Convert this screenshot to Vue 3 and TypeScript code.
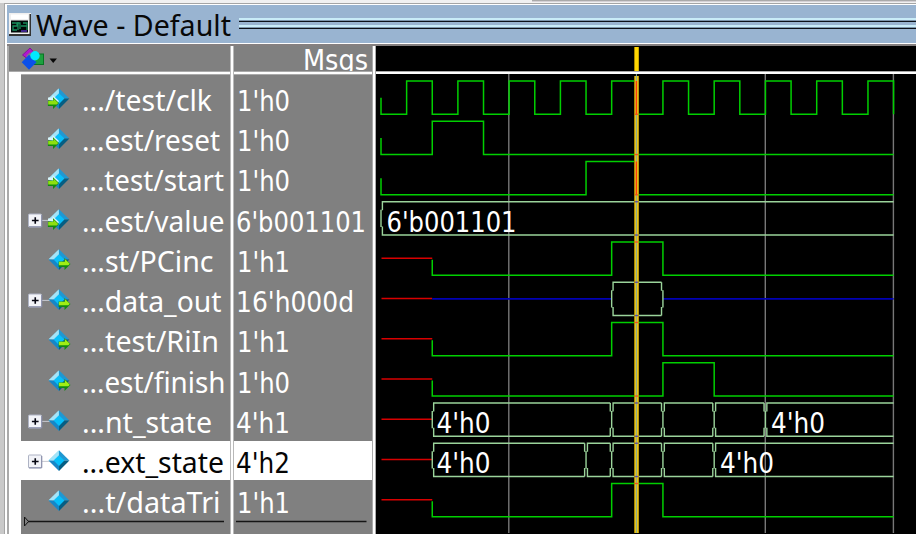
<script setup lang="ts">
type Kind = 'in' | 'out' | 'internal'

interface BusText {
  x: number
  width: number
  text: string
}

interface Signal {
  name: string
  nameWidth: number
  value: string
  valueX: number
  valueWidth: number
  kind: Kind
  expandable?: boolean
  selected?: boolean
  green?: string
  bus?: string
  red?: boolean
  blue?: number[][]
  texts?: BusText[]
}

const PITCH = 40.25
const HIGH = 7
const LOW = 40.3
const MID = 23.7
const LEFT = 5
const tick = (k: number): number => +(LEFT + 25.63 * k).toFixed(2)

// Levels change at the listed ticks, alternating between low and high.
function levels(edges: number[], lead: string, end = 20): string {
  let d = lead
  let high = false
  for (const e of edges) {
    d += `H${tick(e)}V${high ? LOW : HIGH}`
    high = !high
  }
  return d + `H${tick(end)}`
}

const fromStart = `M${LEFT} ${MID}V${LOW}`
const fromUnknown = `M${tick(2)} ${MID + 1}V${LOW}`

function cells(edges: number[], close = false): string {
  let d = ''
  for (let i = 0; i < edges.length; i++) {
    const x = tick(edges[i])
    const last = i === edges.length - 1
    if (!(last && close)) {
      const next = last ? tick(20) : tick(edges[i + 1]) - 1.4
      d += `M${x + 1.4} ${HIGH + 8.5}V${HIGH}H${next}M${x + 1.4} ${LOW - 8.5}V${LOW}H${next}`
    }
    if (i > 0) {
      d += `M${x - 1.4} ${HIGH}V${HIGH + 8.5}M${x - 1.4} ${LOW - 8.5}V${LOW}`
    }
    d += `M${x} ${HIGH + 8}V${LOW - 8}`
  }
  return d
}

const clkEdges = Array.from({ length: 19 }, (_, i) => i + 1)

const signals: Signal[] = [
  { name: '.../test/clk', nameWidth: 130, value: "1'h0", valueX: 3, valueWidth: 53, kind: 'in', green: levels(clkEdges, fromStart) + `V${LOW}` },
  { name: '...est/reset', nameWidth: 138, value: "1'h0", valueX: 3, valueWidth: 53, kind: 'in', green: levels([2, 4], fromStart) },
  { name: '...test/start', nameWidth: 142, value: "1'h0", valueX: 3, valueWidth: 53, kind: 'in', green: levels([8, 10], fromStart) },
  { name: '...est/value', nameWidth: 142.5, value: "6'b001101", valueX: 2, valueWidth: 130, kind: 'in', expandable: true, bus: cells([0]), texts: [{ x: 10.5, width: 130, text: "6'b001101" }] },
  { name: '...st/PCinc', nameWidth: 131.5, value: "1'h1", valueX: 3, valueWidth: 53, kind: 'out', red: true, green: levels([9, 11], fromUnknown) },
  { name: '...data_out', nameWidth: 139.5, value: "16'h000d", valueX: 2, valueWidth: 118, kind: 'out', expandable: true, red: true, blue: [[2, 9], [11, 20]], bus: cells([9, 11], true) },
  { name: '...test/RiIn', nameWidth: 137, value: "1'h1", valueX: 3, valueWidth: 53, kind: 'out', red: true, green: levels([9, 11], fromUnknown) },
  { name: '...est/finish', nameWidth: 143.5, value: "1'h0", valueX: 3, valueWidth: 53, kind: 'out', red: true, green: levels([11, 13], fromUnknown) },
  { name: '...nt_state', nameWidth: 130, value: "4'h1", valueX: 2, valueWidth: 54, kind: 'internal', expandable: true, red: true, bus: cells([2, 9, 11, 13, 15]), texts: [{ x: 60.5, width: 54, text: "4'h0" }, { x: 395, width: 54, text: "4'h0" }] },
  { name: '...ext_state', nameWidth: 142, value: "4'h2", valueX: 2, valueWidth: 54, kind: 'internal', expandable: true, selected: true, red: true, bus: cells([2, 8, 9, 11, 13]), texts: [{ x: 60.5, width: 54, text: "4'h0" }, { x: 344, width: 54, text: "4'h0" }] },
  { name: '...t/dataTri', nameWidth: 138.5, value: "1'h1", valueX: 3, valueWidth: 53, kind: 'internal', red: true, green: levels([9, 11], fromUnknown) },
]

const CURSOR = 260.4
const crossings: { y: number; bus: boolean }[] = [
  { y: LOW, bus: false },
  { y: PITCH + LOW, bus: false },
  { y: PITCH * 2 + LOW, bus: false },
  { y: PITCH * 3 + HIGH, bus: true },
  { y: PITCH * 3 + LOW, bus: true },
  { y: PITCH * 4 + HIGH, bus: false },
  { y: PITCH * 5 + HIGH, bus: true },
  { y: PITCH * 5 + LOW, bus: true },
  { y: PITCH * 6 + HIGH, bus: false },
  { y: PITCH * 7 + LOW, bus: false },
  { y: PITCH * 8 + HIGH, bus: true },
  { y: PITCH * 8 + LOW, bus: true },
  { y: PITCH * 9 + HIGH, bus: true },
  { y: PITCH * 9 + LOW, bus: true },
  { y: PITCH * 10 + HIGH, bus: false },
]
</script>

<template>
  <div class="window">
    <div class="top-edge"><i></i></div>
    <div class="frame">
      <header class="title">
        <svg class="title-icon" width="22" height="23" viewBox="0 0 22 23">
          <rect width="22" height="23" fill="#efefef" />
          <rect x="20.5" y="1" width="1.5" height="22" fill="#333" />
          <rect y="21" width="22" height="2" fill="#333" />
          <rect x="2" y="1.5" width="17" height="4.5" fill="#fff" />
          <rect x="2" y="7.5" width="17" height="12" fill="#020808" />
          <path d="M3 10H8V13H4V17H8M9 9V17M9 10H11V16M12 13H18M14 10H18V17" fill="none" stroke="#188c5b" stroke-width="1.3" />
          <path d="M12 18H18" stroke="#5930c4" stroke-width="1.4" />
        </svg>
        <svg class="title-text" width="202" height="38">
          <text x="5" y="30.7" textLength="195" lengthAdjust="spacingAndGlyphs">Wave - Default</text>
        </svg>
        <div class="grip"><i></i><i></i></div>
      </header>

      <div class="body">
        <section class="names">
          <div class="head">
            <svg width="60" height="25" viewBox="0 0 60 25">
              <path d="M13.5 9L21 2L26 7.5L20 14Z" fill="#b316cf" stroke="#81179a" />
              <path d="M17 10L21 6.2L24 9L20 12Z" fill="#808080" />
              <rect x="23.5" y="8" width="11" height="10.5" fill="#1da23f" stroke="#087525" />
              <path d="M20 8.7L27.5 16.2L20 23.7L12.7 16.2Z" fill="#0b50e9" />
              <circle cx="26" cy="9.7" r="4.7" fill="#00eaff" />
              <path d="M40.5 12.5H48L44.2 17Z" fill="#080808" />
            </svg>
          </div>
          <div class="list name-list">
            <div v-for="s in signals" :key="s.name" class="row" :class="{ selected: s.selected }">
              <svg class="row-icon" width="60" height="39" viewBox="0 -0.5 60 39">
                <template v-if="s.expandable">
                  <path d="M21 19.9H29" stroke="#c6c8cf" />
                  <rect x="7.5" y="13.5" width="13" height="13" rx="1" fill="#f2f3f8" stroke="#aeb3c4" />
                  <path d="M8 26.3H20.8V14.5" fill="none" stroke="#858ba8" />
                  <path d="M10.9 20H17.6M14.25 16.7V23.3" stroke="#050510" stroke-width="1.6" />
                </template>
                <path d="M27.5 19L38 8.7V19Z" fill="#7bd5f5" />
                <path d="M38 8.7L48.4 19H38Z" fill="#2098d2" />
                <path d="M48.4 19L38 29.5V19Z" fill="#065e83" />
                <path d="M38 29.5L27.5 19H38Z" fill="#1686c7" />
                <path d="M38 13.7L43.4 19L38 24.4L32.6 19Z" fill="#06bffa" />
                <path d="M28 18.6L37.5 9.2L37.8 13.5L32.5 18.8Z" fill="#a3e4f8" />
                <template v-if="s.kind === 'in'">
                  <path d="M27 20.3V18H31.6V15.5L38 21.5L37 23Z" fill="#d9f5fa" />
                  <path d="M26.9 21H32V17.8L38 23.6L32 29.5V26.6H26.9Z" fill="#118914" />
                  <path d="M27.2 21.4H32.4V19L37.2 23.5L35.8 25H27.2Z" fill="#8fe010" />
                </template>
                <template v-if="s.kind === 'out'">
                  <path d="M37.6 21H43.5V17.4L49.5 23.4L43.5 29.4V26.5H37.6Z" fill="#118914" />
                  <path d="M38 21.2H43.9V18.6L48.8 23.2L47.4 24.8H38Z" fill="#a0ed15" />
                </template>
              </svg>
              <svg class="label name-label" width="148" height="39">
                <text x="0" y="31.8" :textLength="s.nameWidth" lengthAdjust="spacingAndGlyphs">{{ s.name }}</text>
              </svg>
            </div>
            <svg class="end-mark" width="209" height="12">
              <path d="M3.5 0V9L7.5 4.5Z" fill="none" stroke="#151515" />
              <path d="M7 4.5H203" stroke="#151515" stroke-width="1.3" />
            </svg>
          </div>
        </section>

        <section class="values">
          <div class="head value-head">
            <svg width="70" height="25">
              <text x="1" y="24.2" textLength="65" lengthAdjust="spacingAndGlyphs">Msgs</text>
            </svg>
          </div>
          <div class="list">
            <div v-for="s in signals" :key="s.name" class="row" :class="{ selected: s.selected }">
              <svg class="label" width="138" height="39">
                <text :x="s.valueX" y="31.8" :textLength="s.valueWidth" lengthAdjust="spacingAndGlyphs">{{ s.value }}</text>
              </svg>
            </div>
            <svg class="end-mark" width="138" height="12">
              <path d="M2 4.5H132.5" stroke="#151515" stroke-width="1.3" />
            </svg>
          </div>
        </section>

        <section class="waves">
          <div class="ruler">
            <svg width="540" height="25">
              <rect x="258" y="1" width="5" height="24" fill="#a78600" />
              <rect x="259" y="1" width="3.4" height="24" fill="#ffd600" />
            </svg>
          </div>
          <svg class="plot" width="540" height="459" viewBox="0 0 540 459">
            <path d="M132.8 0V459M389.3 0V459M517.4 0V459" stroke="#777" stroke-width="1.4" />
            <g v-for="(s, i) in signals" :key="s.name" :transform="`translate(0 ${i * PITCH})`">
              <path v-if="s.red" :d="`M${LEFT + 0.5} ${MID - 0.5}H${tick(2)}`" class="unknown" />
              <path v-for="z in s.blue" :key="z[0]" :d="`M${tick(z[0])} ${MID}H${tick(z[1])}`" class="floating" />
              <path v-if="s.green" :d="s.green" class="level" />
              <path v-if="s.bus" :d="s.bus" class="bus" />
              <text
                v-for="t in s.texts"
                :key="t.x"
                :x="t.x"
                y="36.9"
                :textLength="t.width"
                lengthAdjust="spacingAndGlyphs"
              >{{ t.text }}</text>
            </g>
            <rect x="258" y="2" width="5" height="457" fill="#a98700" />
            <rect x="259" y="2" width="3.2" height="457" fill="#e8c51d" />
            <path :d="`M${CURSOR} 0V459`" stroke="#86a894" stroke-width="1" />
            <path :d="`M${CURSOR} 7V${LOW}M${CURSOR} ${PITCH * 2 + 7}V${PITCH * 2 + LOW}`" stroke="#ff3b0a" stroke-width="1.4" />
            <path
              v-for="c in crossings"
              :key="c.y"
              :d="`M259 ${c.y}H262`"
              :stroke="c.bus ? '#5947a0' : '#f4511b'"
              stroke-width="1.3"
            />
          </svg>
        </section>
      </div>
    </div>
  </div>
</template>

<style>
body {
  margin: 0;
  overflow: hidden;
}
</style>

<style scoped>
.window {
  width: 916px;
  height: 534px;
  overflow: hidden;
  box-sizing: border-box;
  padding-left: 4px;
  background: #c9c9c9;
  font-family: "DejaVu Sans Condensed", "DejaVu Sans", sans-serif;
}
svg {
  display: block;
  flex: none;
}
text {
  font-family: "DejaVu Sans Condensed", "DejaVu Sans", sans-serif;
  font-size: 28px;
  font-variant-ligatures: none;
  fill: #fff;
}
.name-label text,
.title-text text {
  font-family: "Noto Sans", "DejaVu Sans", sans-serif;
  font-size: 28.5px;
}
.top-edge {
  height: 3px;
  margin-left: -4px;
  background: #f1f1f1;
  display: flex;
  justify-content: flex-end;
}
.top-edge i {
  width: 384px;
  height: 2px;
  background: linear-gradient(#aaa 1px, #d5d1d5 1px);
}
.frame {
  height: 531px;
  box-sizing: border-box;
  border-top: 1px solid #a5a5a5;
  border-left: 1px solid #a5a5a5;
  padding: 1px 0 0 2px;
  background: #fff;
}
.title {
  height: 38px;
  display: flex;
  align-items: center;
  background: #99b4d1;
  padding-left: 2px;
}
.title-text text {
  fill: #080808;
}
.grip {
  flex: 1;
  margin-left: 6px;
  padding-bottom: 1px;
}
.grip i {
  display: block;
  height: 4px;
  margin-bottom: 3px;
  background: linear-gradient(#c9ecf8 0 2px, #7d95ac 2px 3px, #0c1119 3px 4px);
}
.grip i:last-child {
  margin-bottom: 0;
}
.body {
  display: flex;
  height: 490px;
  margin-top: 1px;
  border-top: 2px solid #858080;
}
.names {
  width: 221px;
  border-left: 2px solid #aaa;
  border-right: 1px solid #bababa;
  flex: none;
}
.values {
  width: 138px;
  margin-left: 2px;
  border-left: 1px solid #b8b8b8;
  border-right: 1px solid #aaa;
  flex: none;
}
.waves {
  flex: 1;
  margin-left: 2px;
  border-left: 1px solid #aaa;
  background: #000;
  overflow: hidden;
}
.head,
.ruler {
  height: 25px;
  overflow: hidden;
  border-bottom: 1px solid #aaa;
}
.head {
  background: #808080;
}
.ruler {
  background: #000;
}
.value-head {
  display: flex;
  justify-content: flex-end;
}
.list {
  height: 454.75px;
  margin-top: 2px;
  border-top: 1px solid #aaa;
  padding-top: 3.75px;
  background: #808080;
}
.name-list {
  margin-left: 12px;
}
.row {
  display: flex;
  height: 39px;
  margin-bottom: 1.25px;
}
.row-icon {
  width: 60px;
}
.name-label {
  margin-left: 1px;
}
.selected {
  background: #fff;
}
.selected text {
  fill: #050505;
}
.end-mark {
  margin-top: -5px;
}
.plot {
  border-top: 2px solid #fff;
}
.level {
  fill: none;
  stroke: #00cf00;
  stroke-width: 1.5;
}
.bus {
  fill: none;
  stroke: #9bd49b;
  stroke-width: 1.4;
}
.unknown {
  fill: none;
  stroke: #d90000;
  stroke-width: 1.5;
}
.floating {
  fill: none;
  stroke: #0000b5;
  stroke-width: 1.7;
}
</style>
